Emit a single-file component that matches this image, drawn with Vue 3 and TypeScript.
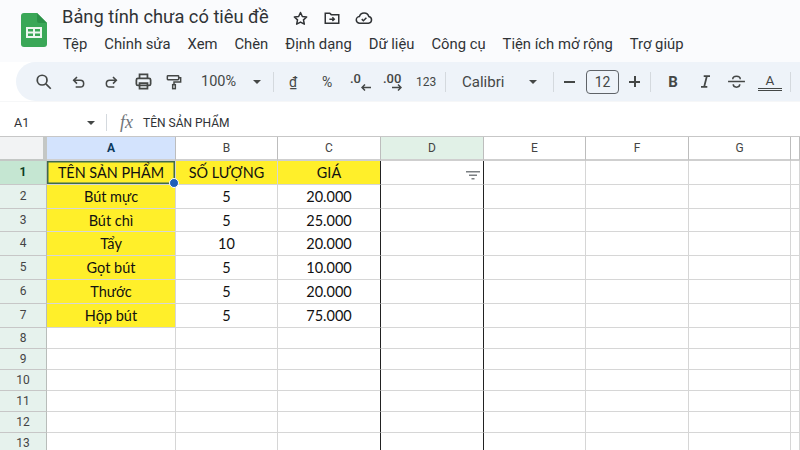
<script setup lang="ts">
const menus = ['Tệp', 'Chỉnh sửa', 'Xem', 'Chèn', 'Định dạng', 'Dữ liệu', 'Công cụ', 'Tiện ích mở rộng', 'Trợ giúp']
const columns = [
  { label: 'A', cls: 'sel-a' },
  { label: 'B', cls: '' },
  { label: 'C', cls: '' },
  { label: 'D', cls: 'sel-d' },
  { label: 'E', cls: '' },
  { label: 'F', cls: '' },
  { label: 'G', cls: '' },
  { label: '', cls: '' },
]
const data: string[][] = [
  ['TÊN SẢN PHẨM', 'SỐ LƯỢNG', 'GIÁ'],
  ['Bút mực', '5', '20.000'],
  ['Bút chì', '5', '25.000'],
  ['Tẩy', '10', '20.000'],
  ['Gọt bút', '5', '10.000'],
  ['Thước', '5', '20.000'],
  ['Hộp bút', '5', '75.000'],
]
const rows = Array.from({ length: 13 }, (_, i) => ({
  n: i + 1,
  cells: data[i] ?? ['', '', ''],
  tall: i < 7,
}))
</script>

<template>
  <div class="app">
    <header class="top">
      <svg class="logo" width="26" height="34" viewBox="0 0 26 34">
        <path d="M3 0H16L26 10V31a3 3 0 0 1-3 3H3a3 3 0 0 1-3-3V3a3 3 0 0 1 3-3Z" fill="#3aa757" />
        <path d="M16 0L26 10H18a2 2 0 0 1-2-2Z" fill="#2b9148" />
        <path d="M5 14H21V25H5ZM7 16V18.500H12V16ZM14 16V18.500H19V16ZM7 20.500V23H12V20.500ZM14 20.500V23H19V20.500Z" fill="#eef7f0" fill-rule="evenodd" />
      </svg>
      <div class="titles">
        <div class="title-row">
          <span class="title">Bảng tính chưa có tiêu đề</span>
          <svg class="ti star" width="17" height="17" viewBox="0 0 24 24" fill="none" stroke="#303336" stroke-width="2.100" stroke-linejoin="round"><path d="M12 3.500l2.600 5.600 6.100.7-4.500 4.200 1.200 6L12 17l-5.400 3 1.200-6-4.500-4.200 6.100-.7Z" /></svg>
          <svg class="ti" width="18" height="18" viewBox="0 0 24 24" fill="none" stroke="#303336" stroke-width="2"><path d="M3 5.500h6l2 2h10V19H3Z" /><path d="M8.500 13.500h6.500M12.500 11l2.500 2.500-2.500 2.500" /></svg>
          <svg class="ti" width="20" height="18" viewBox="0 0 24 24" fill="none" stroke="#303336" stroke-width="2"><path d="M6.500 19a4.500 4.500 0 0 1-.6-9A6.500 6.500 0 0 1 18.400 10.100a4.500 4.500 0 0 1-.4 8.900Z" /><path d="M9 13.500l2.200 2.200 4-4" /></svg>
        </div>
        <nav class="menu">
          <span v-for="m in menus" :key="m">{{ m }}</span>
        </nav>
      </div>
    </header>

    <div class="toolbar">
      <svg class="ic search" width="18" height="18" viewBox="0 0 24 24" fill="none" stroke="#444746" stroke-width="2.300"><circle cx="9.500" cy="9.500" r="6.500" /><path d="M14.500 14.500L21 21" /></svg>
      <svg class="ic undo" width="16" height="16" viewBox="0 0 24 24" fill="none" stroke="#444746" stroke-width="2.300"><path d="M9 4.500L4 9.500l5 5" /><path d="M4 9.500h10a5 5 0 0 1 0 10H7" /></svg>
      <svg class="ic redo" width="16" height="16" viewBox="0 0 24 24" fill="none" stroke="#444746" stroke-width="2.300"><path d="M15 4.500l5 5-5 5" /><path d="M20 9.500H10a5 5 0 0 0 0 10h7" /></svg>
      <svg class="ic print" width="19" height="19" viewBox="0 0 24 24" fill="none" stroke="#444746" stroke-width="2.200"><path d="M7 8V3h10v5" /><rect x="3" y="8" width="18" height="9" rx="2" /><path d="M7 14h10v7H7Z" /></svg>
      <svg class="ic paint" width="16" height="18" viewBox="0 0 24 24" fill="none" stroke="#444746" stroke-width="2.200"><rect x="2" y="2.500" width="17" height="6" rx="1" /><path d="M19 5.500h3V12H12v4" /><rect x="10" y="16" width="4" height="6" /></svg>
      <span class="zoom">100%</span>
      <span class="caret zoom-caret"></span>
      <span class="sep s1"></span>
      <span class="tx dong">₫</span>
      <span class="tx pct">%</span>
      <span class="dec d1"><span>.0</span><svg class="arr-l" width="10" height="7" viewBox="0 0 10 7" fill="none" stroke="#444746" stroke-width="1.500"><path d="M10 3.500H1M4 .5l-3 3 3 3" /></svg></span>
      <span class="dec d2"><span>.00</span><svg class="arr-r" width="10" height="7" viewBox="0 0 10 7" fill="none" stroke="#444746" stroke-width="1.500"><path d="M0 3.500h9M6 .5l3 3-3 3" /></svg></span>
      <span class="tx n123">123</span>
      <span class="sep s2"></span>
      <span class="font">Calibri</span>
      <span class="caret font-caret"></span>
      <span class="sep s3"></span>
      <span class="pm minus"></span>
      <span class="size">12</span>
      <span class="pm plus"></span>
      <span class="sep s4"></span>
      <span class="fmt bold">B</span>
      <svg class="ic ital" width="9" height="13" viewBox="0 0 10 14" fill="none" stroke="#444746" stroke-width="2"><path d="M3 1h7M0 13h7M6.500 1L3.500 13" /></svg>
      <svg class="ic strike" width="17" height="15" viewBox="0 0 18 16" fill="none" stroke="#444746" stroke-width="1.600"><path d="M0 8h18" /><path d="M5 5.500C5 1.500 13 1.500 13 5.500" /><path d="M5.500 11C5.500 15 12.500 15 12.500 11" /></svg>
      <span class="fmt color">A</span>
      <span class="sep s5"></span>
    </div>

    <div class="fbar">
      <span class="ref">A1</span>
      <span class="caret ref-caret"></span>
      <span class="sep fsep"></span>
      <span class="fx">fx</span>
      <span class="ftext">TÊN SẢN PHẨM</span>
    </div>

    <div class="sheet">
      <div class="corner"></div>
      <div v-for="(c, i) in columns" :key="i" class="colh" :class="c.cls">{{ c.label }}</div>
      <template v-for="r in rows" :key="r.n">
        <div class="rowh" :class="{ tall: r.tall, first: r.n === 1 }">{{ r.n }}</div>
        <div
          v-for="(v, i) in r.cells"
          :key="i"
          class="cell"
          :class="{
            tall: r.tall,
            yellow: i === 0 ? r.n <= 7 : r.n === 1,
            head: r.n === 1,
            active: r.n === 1 && i === 0,
            'dark-right': i === 2,
          }"
        >
          {{ v }}<span v-if="r.n === 1 && i === 0" class="handle"></span>
        </div>
        <div class="cell dark-right" :class="{ tall: r.tall }">
          <svg v-if="r.n === 1" class="filter" width="14" height="10" viewBox="0 0 14 10" fill="#7a7f82"><rect x="0" y="1" width="14" height="1.500" /><rect x="3" y="4.500" width="8" height="1.500" /><rect x="5.500" y="8" width="3" height="1.500" /></svg>
        </div>
        <div class="cell" :class="{ tall: r.tall }"></div>
        <div class="cell" :class="{ tall: r.tall }"></div>
        <div class="cell" :class="{ tall: r.tall }"></div>
        <div class="cell" :class="{ tall: r.tall }"></div>
      </template>
    </div>
  </div>
</template>

<style>
html, body { margin: 0; background: #fff; overflow: hidden; }
</style>

<style scoped>
.app {
  width: 800px;
  height: 450px;
  overflow: hidden;
  background: #fff;
  font-family: "Roboto", "Liberation Sans", sans-serif;
  color: #202124;
  display: flex;
  flex-direction: column;
}
.top {
  height: 62px;
  flex: none;
  background: #fafbfd;
  display: flex;
  padding: 13px 0 0 21px;
  box-sizing: border-box;
  gap: 15px;
}
.logo { flex: none; }
.titles { display: flex; flex-direction: column; }
.title-row { display: flex; align-items: center; height: 22px; margin-top: -7px; }
.title { font-size: 18.300px; color: #303336; width: 230px; white-space: nowrap; position: relative; top: -1px; }
.ti { margin-right: 13px; position: relative; top: 1px; }
.star { margin-right: 14px; }
.menu { display: flex; gap: 17px; font-size: 14.800px; color: #303336; margin: 7px 0 0 1px; white-space: nowrap; }
.toolbar {
  height: 39px;
  flex: none;
  margin: 0 0 0 16px;
  background: #eef3f9;
  border-radius: 20px 0 0 20px;
  font-size: 14px;
  color: #444746;
  display: flex;
  align-items: center;
}
.toolbar > * { flex: none; }
.ic { display: block; }
.search { margin-left: 19px; }
.undo { margin-left: 18px; }
.redo { margin-left: 16px; }
.print { margin-left: 15px; }
.paint { margin-left: 13px; }
.zoom { margin-left: 19px; width: 49px; font-size: 14.500px; }
.caret { width: 0; height: 0; border-left: 4px solid transparent; border-right: 4px solid transparent; border-top: 4px solid #444746; }
.zoom-caret { margin-left: 3px; }
.sep { width: 1px; height: 20px; background: #d4d9de; }
.s1 { margin-left: 12px; }
.dong { margin-left: 15px; text-decoration: underline; font-size: 14px; width: 8px; }
.pct { margin-left: 25px; font-size: 14px; width: 12px; }
.dec { display: flex; flex-direction: column; font-size: 13px; line-height: 11px; font-weight: 500; width: 21px; margin-top: 1px; }
.arr-l { align-self: flex-end; }
.arr-r { align-self: flex-end; margin-right: 2px; }
.d1 { margin-left: 16px; }
.d2 { margin-left: 12px; }
.n123 { margin-left: 12px; font-size: 12px; width: 19px; }
.s2 { margin-left: 10px; }
.font { margin-left: 16px; width: 67px; font-size: 15px; }
.s3 { margin-left: 16px; }
.pm { width: 11px; height: 11px; position: relative; }
.pm::before { content: ""; position: absolute; left: 0; right: 0; top: 4.500px; height: 2px; background: #444746; }
.plus::after { content: ""; position: absolute; top: 0; bottom: 0; left: 4.500px; width: 2px; background: #444746; }
.minus { margin-left: 10px; }
.size { margin-left: 11px; width: 31px; height: 22px; border: 1px solid #5f6368; border-radius: 4px; text-align: center; line-height: 22px; font-size: 14px; }
.plus { margin-left: 10px; }
.s4 { margin-left: 10px; }
.fmt { text-align: center; }
.bold { margin-left: 17px; font-weight: 700; width: 10px; font-size: 15px; }
.ital { margin-left: 23px; }
.strike { margin-left: 18px; }
.color { margin-left: 13px; width: 24px; border-bottom: 3px double #444746; line-height: 15px; font-size: 13.500px; }
.s5 { margin-left: 8px; }
.fbar {
  height: 36px;
  flex: none;
  display: flex;
  align-items: center;
  padding-top: 6px;
  background: #fff;
  border-top: 1px solid #f6f7f8;
  box-sizing: border-box;
  font-size: 12px;
  color: #303336;
}
.ref { margin-left: 14px; width: 73px; font-size: 12.500px; }
.fsep { margin-left: 11px; height: 17px; }
.fx { margin-left: 13px; font-family: "Liberation Serif", serif; font-style: italic; font-size: 18px; color: #70757a; }
.ftext { margin-left: 10px; font-size: 12px; }
.sheet {
  display: grid;
  grid-template-columns: 47px 129px 102px 103px 103px 102px 103px 102px 9px;
  grid-auto-rows: min-content;
  flex: 1;
  min-height: 0;
  border-top: 1px solid #c7c7c7;
  margin-top: -1px;
}
.corner { height: 24px; background: #f2f3f4; border-right: 4px solid #c4c7c5; border-bottom: 2px solid #c4c7c5; box-sizing: border-box; }
.colh {
  height: 24px;
  box-sizing: border-box;
  border-right: 1px solid #bdbdbd;
  border-bottom: 2px solid #cfcfcf;
  text-align: center;
  font-size: 12px;
  line-height: 23px;
  color: #444;
}
.sel-a { background: #d3e3fd; font-weight: 700; color: #0b3a5e; }
.sel-d { background: #e1f1e7; }
.rowh {
  height: 21px;
  box-sizing: border-box;
  background: #e6f2ed;
  border-right: 1px solid #b8bdba;
  border-bottom: 1px solid #c7c7c7;
  text-align: center;
  font-size: 12px;
  line-height: 20px;
  color: #444;
}
.rowh.tall { height: 23.800px; line-height: 23px; }
.rowh.first { background: #c5e6d2; font-weight: 700; color: #0f3d24; }
.cell {
  height: 21px;
  box-sizing: border-box;
  border-right: 1px solid #d6d6d6;
  border-bottom: 1px solid #d6d6d6;
  text-align: center;
  font-family: "Lato", "Liberation Sans", sans-serif;
  font-size: 14.500px;
  line-height: 24px;
  color: #111;
  position: relative;
  white-space: nowrap;
}
.cell.tall { height: 23.800px; }
.yellow { background: #ffef2a; }
.head { font-size: 14.400px; }
.active { box-shadow: inset 0 0 0 1.500px #3e6b4e; }
.handle { position: absolute; right: -4px; bottom: -4px; width: 8px; height: 8px; background: #1f5fb8; border: 1px solid #fff; border-radius: 50%; z-index: 2; }
.dark-right { border-right: 1.500px solid #222; }
.filter { position: absolute; right: 3px; top: 9px; }
</style>
